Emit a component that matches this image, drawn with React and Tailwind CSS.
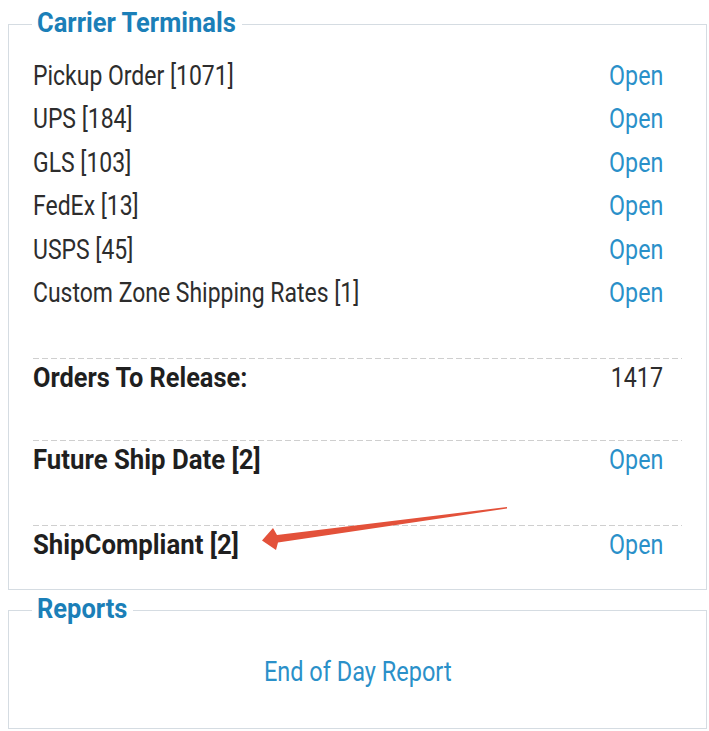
import React from "react";

const carriers = [
  { label: "Pickup Order [1071]" },
  { label: "UPS [184]" },
  { label: "GLS [103]" },
  { label: "FedEx [13]" },
  { label: "USPS [45]" },
  { label: "Custom Zone Shipping Rates [1]" },
];

// the reference uses a condensed face, so Roboto is squeezed to match
function Narrow({ children, className = "" }) {
  return (
    <span className={`inline-block whitespace-nowrap ${className}`}>
      {children}
    </span>
  );
}

function Dashed() {
  return (
    <div className="h-px w-full bg-[linear-gradient(to_right,#cfcfcf_6px,transparent_6px)] bg-[length:9px_1px] bg-repeat-x" />
  );
}

export default function App() {
  return (
    <div
      className="relative min-h-screen bg-white pt-[8px]"
      style={{ fontFamily: "Roboto, 'Liberation Sans', sans-serif" }}
    >
      {/* Carrier Terminals */}
      <fieldset className="ml-[8px] w-[699px] border border-[#d5dce2] pl-[24px] pr-[24px] pb-[28px]">
        <legend className="ml-[-1px] px-[5px] pb-[3px] text-[28px] leading-[30px] font-bold text-[#1b7fb8]">
          <span className="block w-[200px]">
            <Narrow className="origin-left scale-x-[0.91]">Carrier Terminals</Narrow>
          </span>
        </legend>

        <div className="mt-[12.5px] pr-[19px] text-[28px] leading-[43.6px] text-[#2d2d2d]">
          {carriers.map((c) => (
            <div key={c.label} className="flex items-center justify-between">
              <Narrow className="origin-left scale-x-[0.82]">{c.label}</Narrow>
              <Narrow className="origin-right scale-x-[0.83] text-[#2a90c9]">Open</Narrow>
            </div>
          ))}
        </div>

        <div className="mt-[43px]">
          <Dashed />
          <div className="flex justify-between pt-[3px] pr-[19px] text-[28px] leading-[32px]">
            <Narrow className="origin-left scale-x-[0.905] font-bold text-[#1f1f1f]">Orders To Release:</Narrow>
            <Narrow className="origin-right scale-x-[0.83] text-[#2d2d2d]">1417</Narrow>
          </div>
        </div>

        <div className="mt-[46px]">
          <Dashed />
          <div className="flex justify-between pt-[3px] pr-[19px] text-[28px] leading-[32px]">
            <Narrow className="origin-left scale-x-[0.92] font-bold text-[#1f1f1f]">Future Ship Date [2]</Narrow>
            <Narrow className="origin-right scale-x-[0.83] text-[#2a90c9]">Open</Narrow>
          </div>
        </div>

        <div className="mt-[49px]">
          <Dashed />
          <div className="flex justify-between pt-[3px] pr-[19px] text-[28px] leading-[32px]">
            <Narrow className="origin-left scale-x-[0.92] font-bold text-[#1f1f1f]">ShipCompliant [2]</Narrow>
            <Narrow className="origin-right scale-x-[0.83] text-[#2a90c9]">Open</Narrow>
          </div>
        </div>
      </fieldset>

      {/* Reports */}
      <fieldset className="mt-[4px] ml-[8px] w-[699px] border border-[#d5dce2] pl-[24px] pr-[24px] pb-[34px]">
        <legend className="ml-[-1px] px-[5px] pb-[3px] text-[28px] leading-[30px] font-bold text-[#1b7fb8]">
          <span className="block w-[91px]">
            <Narrow className="origin-left scale-x-[0.91]">Reports</Narrow>
          </span>
        </legend>
        <div className="mt-[23px] text-center text-[28px] leading-[43.6px] text-[#2a90c9]">
          <Narrow className="origin-center scale-x-[0.84]">End of Day Report</Narrow>
        </div>
      </fieldset>

      {/* annotation arrow */}
      <svg
        className="pointer-events-none absolute left-0 top-0"
        width="709"
        height="731"
        viewBox="0 0 709 731"
      >
        <polygon
          points="262,540.5 273,528 277,535 507,507 507,508.5 278,542.5 276,550"
          fill="#e3513a"
        />
      </svg>
    </div>
  );
}
